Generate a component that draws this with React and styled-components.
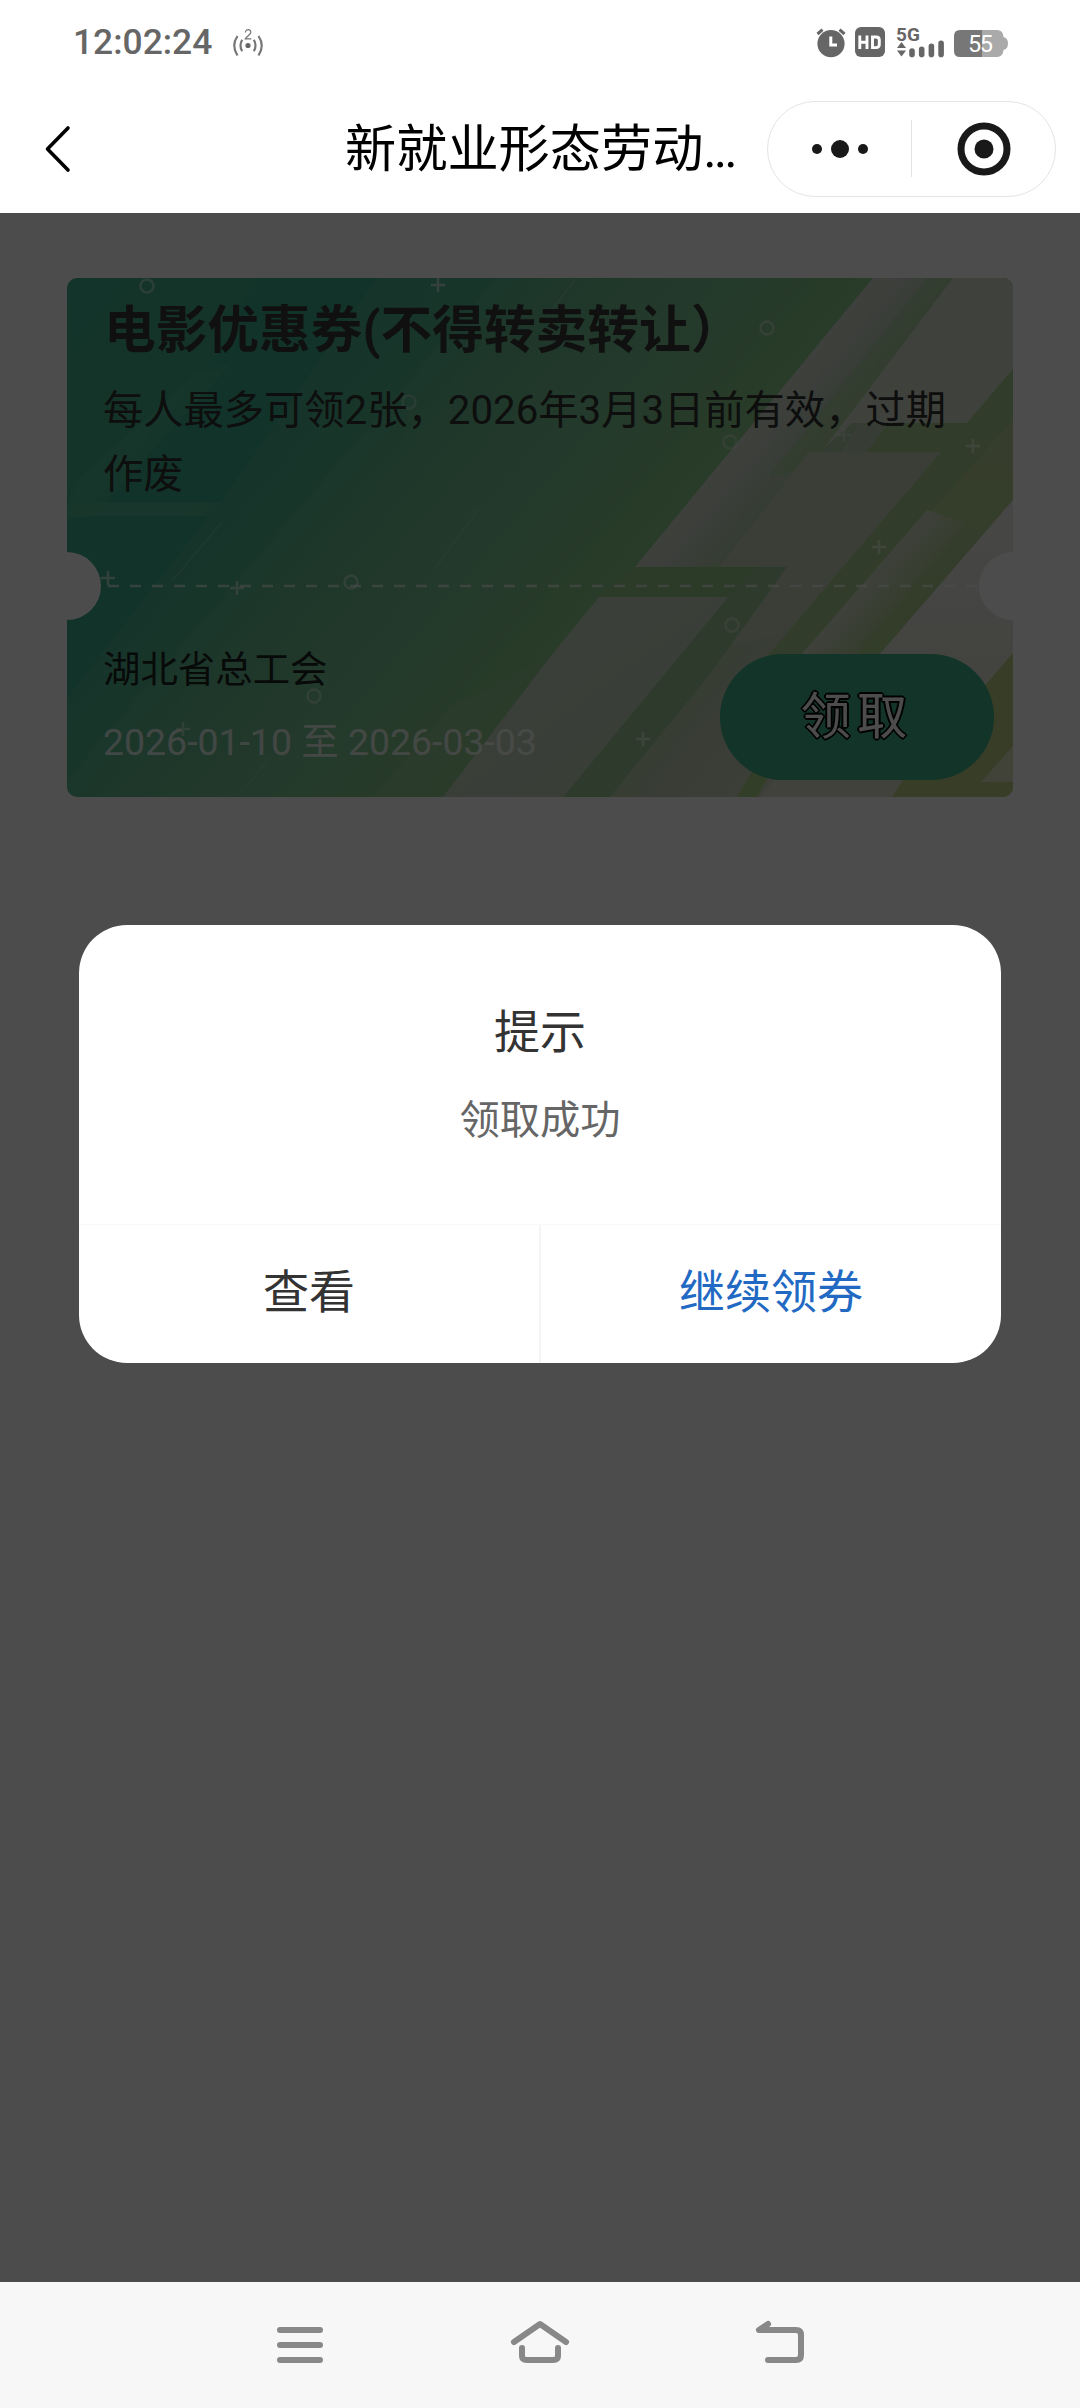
import React from "react";
import styled, { createGlobalStyle } from "styled-components";

const GlobalStyle = createGlobalStyle`
  * {
    box-sizing: border-box;
  }

  body {
    margin: 0;
    font-family: Roboto, "Noto Sans CJK SC", sans-serif;
  }
`;

const Screen = styled.div`
  display: flex;
  flex-direction: column;
  width: 1080px;
  height: 2408px;
  background-color: #fff;
`;

const StatusBar = styled.div`
  display: flex;
  align-items: center;
  justify-content: space-between;
  height: 84px;
  padding: 0 71px 0 73px;
  color: #666;
`;

const StatusGroup = styled.div`
  display: flex;
  align-items: center;
`;

const Clock = styled.span`
  margin-right: 20px;
  font-size: 35.4px;
  font-weight: 500;
  line-height: 42px;
`;

const Header = styled.header`
  display: grid;
  grid-template-columns: 345px 1fr 289px;
  align-items: center;
  height: 129px;
  padding-right: 24px;
`;

const BackButton = styled.div`
  display: flex;
  padding-left: 40px;
`;

const PageTitle = styled.div`
  padding-top: 3px;
  font-size: 51.2px;
  line-height: 72px;
  color: #000;
  white-space: nowrap;
`;

const Ellipsis = styled.span`
  letter-spacing: -3px;
`;

const Capsule = styled.div`
  display: flex;
  align-items: center;
  height: 96px;
  border: 1px solid #e4e4e4;
  border-radius: 48px;
`;

const CapsuleItem = styled.div`
  display: flex;
  flex: 1;
  justify-content: center;
  align-items: center;
  height: 57px;

  & + & {
    border-left: 1px solid #e4e4e4;
  }
`;

const Content = styled.main`
  display: grid;
  height: 2069px;
  background-color: #fff;

  > * {
    grid-area: 1 / 1;
  }
`;

const TicketList = styled.div`
  padding: 65px 67px;
`;

const Ticket = styled.div`
  position: relative;
  display: flex;
  flex-direction: column;
  height: 519px;
  padding: 20px 19px 17px 36px;
  border-radius: 10px;
  overflow: hidden;
`;

const TicketArt = styled.svg`
  position: absolute;
  top: 0;
  left: 0;
`;

const TicketTitle = styled.div`
  position: relative;
  padding-left: 1px;
  font-size: 51.7px;
  font-weight: 700;
  line-height: 65px;
  color: #383838;
  white-space: nowrap;
`;

const TicketDesc = styled.div`
  position: relative;
  height: 208px;
  margin-top: 16px;
  padding-right: 17px;
  font-size: 40.28px;
  line-height: 63.5px;
  color: #2c302c;
`;

const TicketFooter = styled.div`
  position: relative;
  display: flex;
  flex: 1;
  justify-content: space-between;
  align-items: flex-end;
`;

const TicketInfo = styled.div`
  display: flex;
  flex-direction: column;
  gap: 16px;
  padding-bottom: 10px;
  font-size: 37.44px;
  line-height: 56px;
`;

const Organizer = styled.div`
  color: #1c241e;
`;

const Period = styled.div`
  color: #fff;
  opacity: 0.76;
`;

const ClaimButton = styled.div`
  display: flex;
  justify-content: center;
  align-items: center;
  width: 274px;
  height: 126px;
  padding-bottom: 10px;
  border-radius: 63px;
  background-color: #3dad8a;
  color: #fff;
  font-size: 50.4px;
  letter-spacing: 6px;
  text-shadow: 2px 0 0 #000, -2px 0 0 #000, 0 2px 0 #000, 0 -2px 0 #000,
    1px 1px 0 #000, -1px -1px 0 #000, 1px -1px 0 #000, -1px 1px 0 #000;
`;

const Mask = styled.div`
  z-index: 1;
  padding: 712px 79px 0;
  background-color: rgba(0, 0, 0, 0.7);
`;

const Dialog = styled.div`
  display: flex;
  flex-direction: column;
  height: 438px;
  border-radius: 48px;
  background-color: #fff;
  overflow: hidden;
`;

const DialogBody = styled.div`
  display: flex;
  flex: 1;
  flex-direction: column;
  align-items: center;
  padding-top: 75px;
`;

const DialogTitle = styled.div`
  font-size: 46px;
  line-height: 64px;
  color: #333;
`;

const DialogText = styled.div`
  margin-top: 29px;
  font-size: 40.3px;
  line-height: 56px;
  color: #666;
`;

const DialogActions = styled.div`
  display: flex;
  height: 139px;
  border-top: 1px solid #f9f9f9;
`;

const DialogAction = styled.div`
  display: flex;
  flex: 1;
  justify-content: center;
  align-items: center;
  padding-bottom: 13px;
  font-size: 46px;
  color: ${(props) => (props.$primary ? "#2269c4" : "#333")};

  & + & {
    border-left: 2px solid #f5f5f5;
  }
`;

const SystemNav = styled.nav`
  display: flex;
  justify-content: space-between;
  align-items: center;
  height: 126px;
  padding: 0 270px;
  background-color: #f7f7f7;
`;

const rings = [
  [80, 8, 0.42],
  [342, 124, 0.28],
  [700, 50, 0.38],
  [663, 164, 0.3],
  [284, 304, 0.45],
  [247, 418, 0.38],
  [665, 347, 0.36],
];

const pluses = [
  [371, 7, 0.55],
  [777, 157, 0.3],
  [906, 168, 0.5],
  [41, 300, 0.55],
  [170, 310, 0.5],
  [116, 451, 0.4],
  [812, 269, 0.5],
  [576, 461, 0.5],
];

const TicketBackground = () => (
  <TicketArt width="946" height="519" viewBox="0 0 946 519">
    <defs>
      <linearGradient id="base" gradientUnits="userSpaceOnUse" x1="0" y1="0" x2="805" y2="684">
        <stop offset="0" stopColor="#42af8c" />
        <stop offset="0.15" stopColor="#44b08c" />
        <stop offset="0.26" stopColor="#4eb18c" />
        <stop offset="0.36" stopColor="#65b98e" />
        <stop offset="0.46" stopColor="#77c08f" />
        <stop offset="0.58" stopColor="#8ac789" />
        <stop offset="1" stopColor="#a2d088" />
      </linearGradient>
      <linearGradient id="sheen" gradientUnits="userSpaceOnUse" x1="687" y1="146" x2="757" y2="205">
        <stop offset="0" stopColor="#cdd5c8" />
        <stop offset="0.35" stopColor="#c3cfbf" />
        <stop offset="1" stopColor="#a3c796" />
      </linearGradient>
      <linearGradient id="glow" gradientUnits="userSpaceOnUse" x1="776" y1="328" x2="826" y2="370">
        <stop offset="0" stopColor="#d2d8c6" />
        <stop offset="0.45" stopColor="#c6d2b2" stopOpacity="0.7" />
        <stop offset="1" stopColor="#b4cf92" stopOpacity="0" />
      </linearGradient>
      <linearGradient id="fade" x1="0" y1="0" x2="0" y2="1">
        <stop offset="0" stopColor="#b8cd94" />
        <stop offset="1" stopColor="#a8cb8c" />
      </linearGradient>
      <linearGradient id="pale" gradientUnits="userSpaceOnUse" x1="450" y1="330" x2="560" y2="480">
        <stop offset="0" stopColor="#c2d2c2" />
        <stop offset="1" stopColor="#bfd1b9" />
      </linearGradient>
      <linearGradient id="field" gradientUnits="userSpaceOnUse" x1="600" y1="300" x2="860" y2="500">
        <stop offset="0" stopColor="#b2cba8" />
        <stop offset="0.4" stopColor="#bfcdb2" />
        <stop offset="1" stopColor="#dddfcb" />
      </linearGradient>
      <linearGradient id="corner" x1="0" y1="0" x2="0" y2="1">
        <stop offset="0" stopColor="#ececea" />
        <stop offset="1" stopColor="#d9dcc8" />
      </linearGradient>
    </defs>

    <rect width="946" height="519" fill="url(#base)" />

    {/* darker facets on the left */}
    <path d="M190 0 H310 L154 224 H28 L150 76 Z" fill="#3cab89" />
    <path d="M0 238 H142 L0 420 Z" fill="#3cab89" />
    <path d="M130 95 L165 85 L24 240 H0 V226 L12 200 Z" fill="#5cba96" opacity="0.35" />
    <path d="M28 225 H154 L143 238 H0 L12 225 Z" fill="#5cba96" opacity="0.5" />
    <path d="M310 0 H430 L0 500 V420 Z" fill="#4ab18e" opacity="0.3" />
    <path d="M155 244 L105 303 M412 230 L368 291 M508 2 L480 38 M204 478 L172 517" stroke="#a9d9b5" strokeWidth="1.4" fill="none" opacity="0.35" />

    {/* pale stripes on the right */}
    <path d="M806 0 H946 V519 H376 L568 289 Z" fill="url(#field)" />
    <path d="M806 0 H886 L700 289 H568 Z" fill="url(#sheen)" />
    <path d="M886 0 H946 V91 L900 145 H785 L757 170 Z" fill="#d3dbc8" />
    <path d="M860 0 H886 L742 190 L700 200 Z" fill="#9ecb90" opacity="0.5" />
    <path d="M742 174 H874 L724 352 L620 380 L703 289 H652 Z" fill="#c2cfb9" />
    <path d="M822 145 H900 L946 91 V142 L905 190 L740 390 H690 L874 174 H799 Z" fill="#a4cd8c" />
    <path d="M946 142 V222 L813 376 H738 Z" fill="url(#fade)" />
    <path d="M860 232 L735 376 H790 L900 245 Z" fill="url(#glow)" />
    <path d="M568 289 H706 L661 319 H532 Z" fill="#91c588" />
    <path d="M661 319 L692 289 H720 L640 400 L543 519 H496 Z" fill="#9cc794" />
    <path d="M532 319 H661 L496 519 H376 L483 379 Z" fill="url(#pale)" />
    <path d="M383 429 L483 379 L376 519 H306 Z" fill="#9bc495" opacity="0.4" />
    <path d="M690 485 H709 L690 519 H670 Z" fill="#a7d084" />
    <path d="M946 222 V375 L836 505 L825 519 H693 L813 376 Z" fill="url(#corner)" />
    <path d="M946 375 V519 H825 L836 502 Z" fill="#bccb84" />
    <path d="M946 468 V504 H914 Z" fill="#d9dfbe" />

    <path d="M41 308 H912" stroke="#fff" strokeWidth="2.6" strokeDasharray="11 11" opacity="0.6" />
    {rings.map(([x, y, alpha]) => (
      <circle key={`${x}-${y}`} cx={x} cy={y} r="6.5" fill="none" stroke="#fff" strokeWidth="2.4" opacity={alpha} />
    ))}
    {pluses.map(([x, y, alpha]) => (
      <path key={`${x}-${y}`} d={`M${x - 7} ${y}h14M${x} ${y - 7}v14`} stroke="#fff" strokeWidth="2.4" opacity={alpha} />
    ))}
    <circle cx="0" cy="308" r="34" fill="#fff" />
    <circle cx="946" cy="308" r="34" fill="#fff" />
  </TicketArt>
);

const VibrateIcon = () => (
  <svg width="32" height="34" viewBox="0 0 32 34" fill="none" stroke="#777" strokeWidth="2.2">
    <circle cx="16" cy="20.5" r="2.6" fill="#666" stroke="none" />
    <path d="M10.2 14.8Q6.8 20.5 10.2 26.2M21.8 14.8Q25.2 20.5 21.8 26.2M5.5 11Q-1 20.5 5.5 30.5M26.5 11Q33 20.5 26.5 30.5" />
    <path d="M13.4 7.6C13.4 3.6 19 3.8 18.8 7.4C18.6 9.6 15 11.4 13.4 13.8H19.4" strokeWidth="1.3" />
  </svg>
);

const StatusIcons = () => (
  <svg width="193" height="54" viewBox="816 15 193 54" fontFamily="Roboto, sans-serif">
    <circle cx="831" cy="43.7" r="13.6" fill="#666" />
    <path d="M817.5 34 L822.5 29.6 M844.5 34 L839.5 29.6" stroke="#666" strokeWidth="3" />
    <path d="M830.8 36.5 V45 H837" stroke="#fff" strokeWidth="3" fill="none" />
    <rect x="855" y="27" width="30" height="30" rx="6" fill="#666" />
    <path d="M859.8 35.5V49M867 35.5V49M860 42.3H867M872.5 37H876Q879.3 37 879.3 40V44.6Q879.3 47.6 876 47.6H872.5Z" stroke="#fff" strokeWidth="2.9" fill="none" />
    <text x="896" y="41" fontSize="19" fontWeight="700" fill="#666">5G</text>
    <path d="M901.5 42 L906 48 H897 Z M901.5 56.5 L906 50.5 H897 Z" fill="#666" />
    <path d="M912 51V54.4M921.7 49.4V54.4M931.4 46.4V54.4M941.1 43.4V54.4" stroke="#666" strokeWidth="5.6" strokeLinecap="round" />
    <path d="M960 30 H982 V57 H960 Q954 57 954 51 V36 Q954 30 960 30 Z" fill="#777" />
    <path d="M982 30 H997 Q1003 30 1003.5 37 Q1008 38 1008 43.5 Q1008 49 1003.5 50 Q1003 57 997 57 H982 Z" fill="#aaa" />
    <text x="980.5" y="52" fontSize="23.5" textAnchor="middle" textLength="25" fill="#fff">55</text>
  </svg>
);

const BackIcon = () => (
  <svg width="34" height="50" viewBox="0 0 34 50" fill="none" stroke="#000" strokeWidth="3.6" strokeLinecap="round" strokeLinejoin="round">
    <path d="M28 4 L7.5 25 L28 46" />
  </svg>
);

const MoreIcon = () => (
  <svg width="58" height="20" viewBox="0 0 58 20" fill="#191919">
    <circle cx="6" cy="10" r="5" />
    <circle cx="29" cy="10" r="9" />
    <circle cx="52" cy="10" r="5" />
  </svg>
);

const TargetIcon = () => (
  <svg width="54" height="54" viewBox="0 0 54 54">
    <circle cx="27" cy="27" r="23" fill="none" stroke="#191919" strokeWidth="7" />
    <circle cx="27" cy="27" r="9.5" fill="#191919" />
  </svg>
);

const NavIcon = ({ d }) => (
  <svg width="60" height="50" viewBox="0 0 60 50" fill="none" stroke="#888" strokeWidth="6" strokeLinecap="round" strokeLinejoin="round">
    <path d={d} />
  </svg>
);

const App = () => {
  return (
    <Screen>
      <GlobalStyle />
      <StatusBar>
        <StatusGroup>
          <Clock>12:02:24</Clock>
          <VibrateIcon />
        </StatusGroup>
        <StatusIcons />
      </StatusBar>
      <Header>
        <BackButton>
          <BackIcon />
        </BackButton>
        <PageTitle>
          新就业形态劳动<Ellipsis>...</Ellipsis>
        </PageTitle>
        <Capsule>
          <CapsuleItem>
            <MoreIcon />
          </CapsuleItem>
          <CapsuleItem>
            <TargetIcon />
          </CapsuleItem>
        </Capsule>
      </Header>
      <Content>
        <TicketList>
          <Ticket>
            <TicketBackground />
            <TicketTitle>电影优惠券(不得转卖转让）</TicketTitle>
            <TicketDesc>每人最多可领2张，2026年3月3日前有效，过期作废</TicketDesc>
            <TicketFooter>
              <TicketInfo>
                <Organizer>湖北省总工会</Organizer>
                <Period>2026-01-10 至 2026-03-03</Period>
              </TicketInfo>
              <ClaimButton>领取</ClaimButton>
            </TicketFooter>
          </Ticket>
        </TicketList>
        <Mask>
          <Dialog>
            <DialogBody>
              <DialogTitle>提示</DialogTitle>
              <DialogText>领取成功</DialogText>
            </DialogBody>
            <DialogActions>
              <DialogAction>查看</DialogAction>
              <DialogAction $primary>继续领券</DialogAction>
            </DialogActions>
          </Dialog>
        </Mask>
      </Content>
      <SystemNav>
        <NavIcon d="M10 10H50M10 25H50M10 40H50" />
        <NavIcon d="M4 22L30 4L56 22M12 28V36Q12 40 17 40H43Q48 40 48 36V28" />
        <NavIcon d="M18 4L9 10H46Q51 10 51 15V35Q51 40 46 40H18" />
      </SystemNav>
    </Screen>
  );
};

export default App;
